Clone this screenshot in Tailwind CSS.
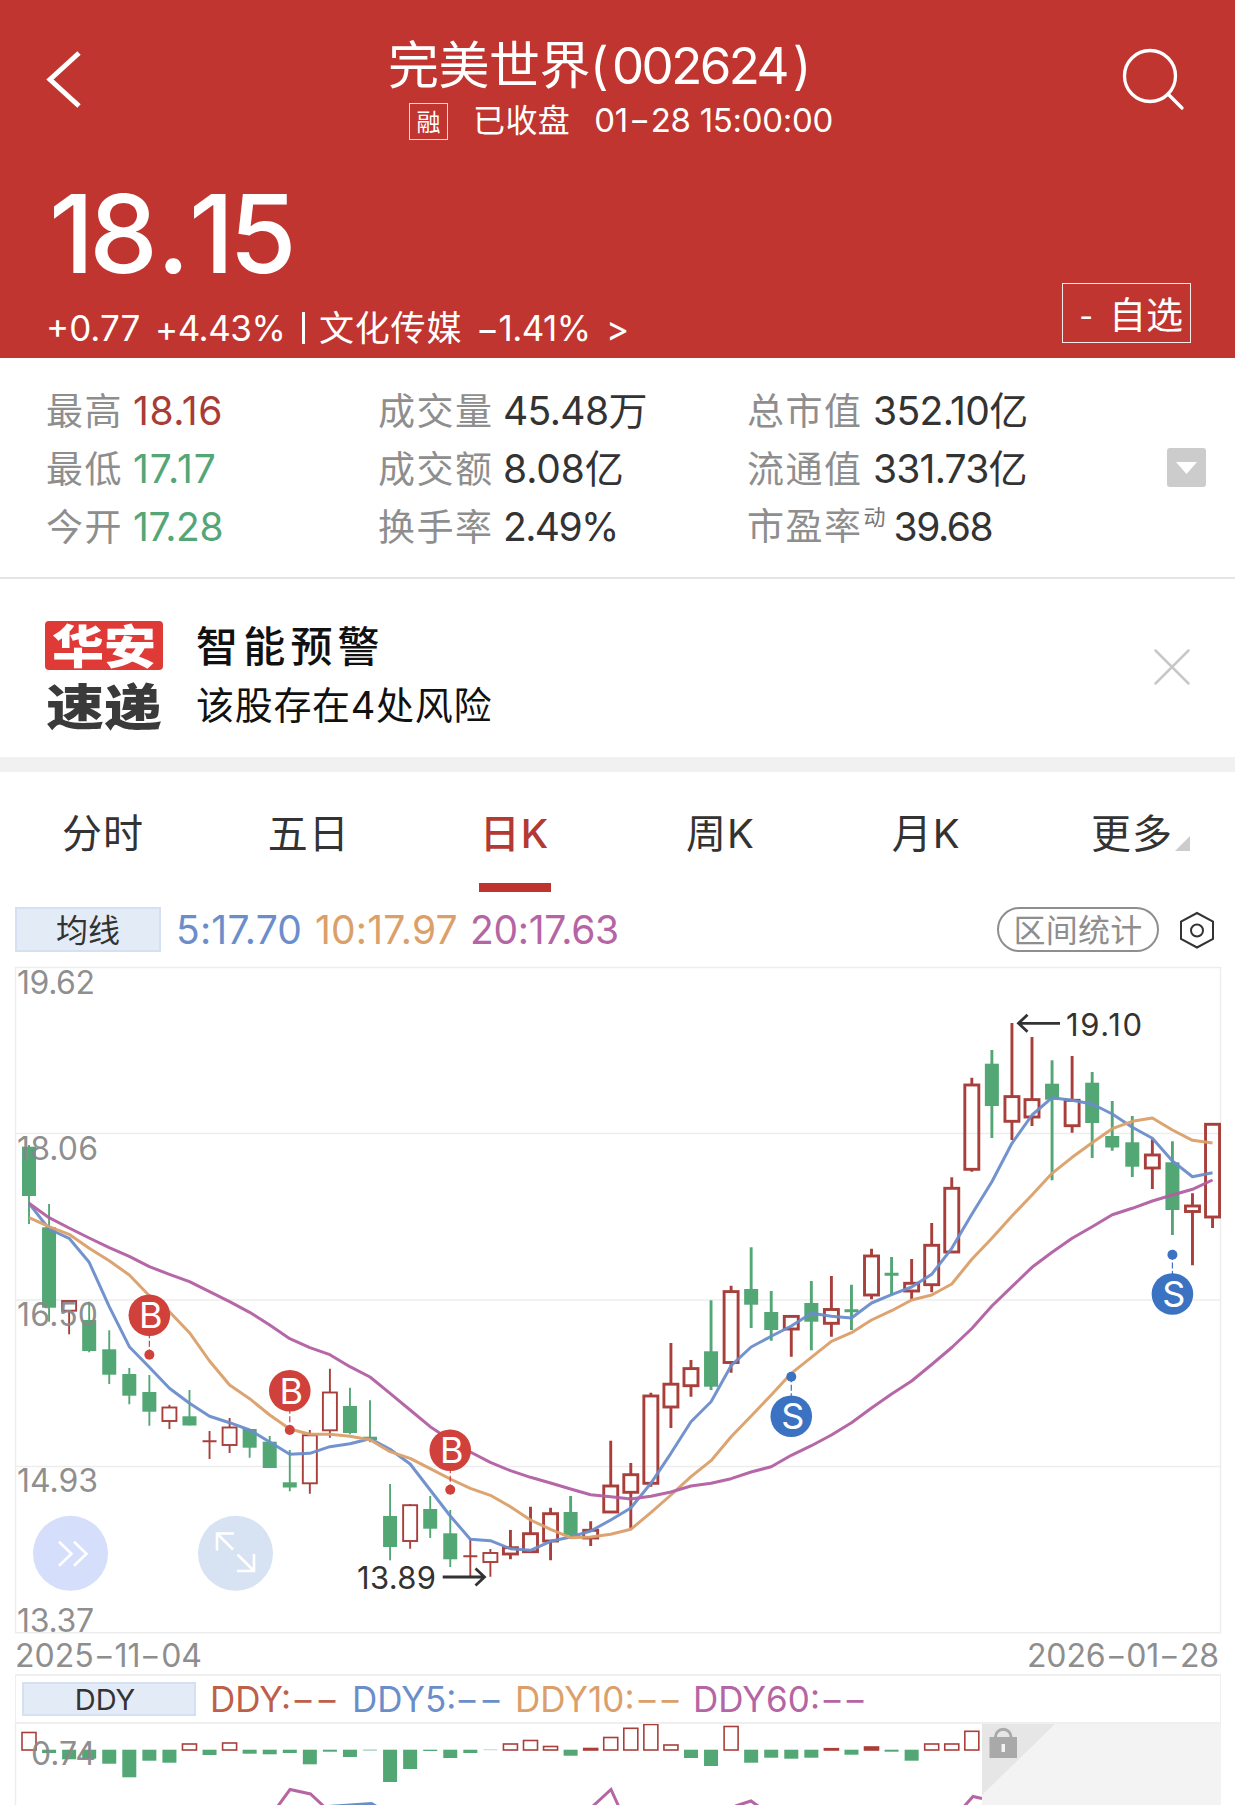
<!DOCTYPE html>
<html lang="zh-CN">
<head>
  <meta charset="UTF-8" />
  <meta name="viewport" content="width=device-width, initial-scale=1.0"/>
  <title>完美世界(002624)</title>
  <script src="https://cdn.jsdelivr.net/npm/@tailwindcss/browser@4"></script>
</head>
<body class="w-[1235px] bg-white text-[#333] leading-none whitespace-nowrap overflow-x-hidden font-[Inter,'Noto_Sans_CJK_SC',sans-serif]">

  <!-- Header -->
  <header class="h-[358px] bg-[#c0352f] text-white">
    <div class="grid grid-cols-[388px_421px_1fr] h-[179px]">
      <svg class="w-[40px] h-[64px] ml-[44px] mt-[48px]" viewBox="0 0 40 64" fill="none" stroke="#fff" stroke-width="5">
        <path d="M35 5 6 31.500 35 58"/>
      </svg>
      <div class="flex flex-col pt-[40px]">
        <h1 class="text-[51px] tracking-[-0.5px]">完美世界<span class="tracking-[-2.6px]">(<span class="ml-[6px] mr-[6px]">002624</span>)</span></h1>
        <div class="flex items-start mt-[12px] ml-[21px]">
          <span class="shrink-0 border border-white/80 w-[39px] h-[37px] text-[24px] leading-[38px] text-center text-white">融</span>
          <span class="shrink-0 text-[32px] tracking-[0.4px] ml-[25px] mt-[2px]">已收盘</span>
          <span class="shrink-0 text-[33px] tracking-[-0.3px] ml-[24px] mt-[1px]">01<i class="inline-block not-italic scale-x-[1.4] mx-[4px]">-</i>28 15:00:00</span>
        </div>
      </div>
      <svg class="w-[64px] h-[64px] ml-[312px] mt-[48px]" viewBox="0 0 64 64" fill="none" stroke="#fff" stroke-width="3.300" stroke-linecap="round">
        <circle cx="29" cy="28" r="25.500"/>
        <path d="M47 46 61 60"/>
      </svg>
    </div>
    <div class="flex justify-between pl-[46px] pr-[44px]">
      <div>
        <div class="text-[109px] font-medium tracking-[-5px] pl-[3px]">18<span class="mx-[4px]">.</span>15</div>
        <div class="flex text-[35px] mt-[23px]">
          <span class="w-[109px] tracking-[0px]">+0.77</span>
          <span class="w-[145px] tracking-[-0.5px]">+4.43%</span>
          <span class="w-[3px] h-[32px] mt-[1px] mx-[2px] bg-white"></span>
          <span class="w-[157px] ml-[12px] tracking-[0.8px]">文化传媒</span>
          <span class="w-[130px] tracking-[-0.6px]">−1.41%</span>
          <span>&gt;</span>
        </div>
      </div>
      <div class="mt-[104px] w-[129px] h-[60px] border border-white/90 flex items-center justify-end pr-[7px] pt-[4px] text-[37px]">
        <span class="mr-[16px] text-[30px] pt-[2px]">-</span>自选
      </div>
    </div>
  </header>

  <!-- Quote -->
  <section class="relative h-[221px] pt-[24px] pl-[46px] border-b-2 border-[#e5e5e5] grid grid-cols-[332px_369px_1fr] auto-rows-[58px] text-[39px] leading-[58px] tracking-[-0.8px]">
    <div class="h-[58px]"><span class="inline-block w-[87px] text-[37px] text-[#8e8e8e] tracking-[1.5px]">最高</span><span class="text-[#a83c36] tracking-[0.6px]">18.16</span></div>
    <div class="h-[58px]"><span class="inline-block w-[125px] text-[37px] text-[#8e8e8e] tracking-[1.5px]">成交量</span><span class="tracking-[-0.6px]">45.48万</span></div>
    <div class="h-[58px]"><span class="inline-block w-[126px] text-[37px] text-[#8e8e8e] tracking-[1.5px]">总市值</span><span class="tracking-[-0.6px]">352.10亿</span></div>
    <div class="h-[58px]"><span class="inline-block w-[87px] text-[37px] text-[#8e8e8e] tracking-[1.5px]">最低</span><span class="text-[#54a677] tracking-[1px]">17.17</span></div>
    <div class="h-[58px]"><span class="inline-block w-[125px] text-[37px] text-[#8e8e8e] tracking-[1.5px]">成交额</span><span class="tracking-[-0.1px]">8.08亿</span></div>
    <div class="h-[58px]"><span class="inline-block w-[126px] text-[37px] text-[#8e8e8e] tracking-[1.5px]">流通值</span><span>331.73亿</span></div>
    <div class="h-[58px]"><span class="inline-block w-[87px] text-[37px] text-[#8e8e8e] tracking-[1.5px]">今开</span><span class="text-[#54a677] tracking-[-0.4px]">17.28</span></div>
    <div class="h-[58px]"><span class="inline-block w-[125px] text-[37px] text-[#8e8e8e] tracking-[1.5px]">换手率</span><span class="tracking-[-1.6px]">2.49%</span></div>
    <div class="h-[58px] flex"><span class="text-[37px] text-[#8e8e8e] tracking-[1.5px]">市盈率</span><span class="w-[31px] pl-[1px] text-[22px] leading-[38px] text-[#777]">动</span><span class="tracking-[-1.4px]">39.68</span></div>
    <div class="absolute left-[1167px] top-[90px] w-[39px] h-[39px] rounded-[3px] bg-[#ccc] flex items-center justify-center">
      <svg class="w-[21px] h-[12px]" viewBox="0 0 21 12"><path d="M0 0H21L10.500 12Z" fill="#fff"/></svg>
    </div>
  </section>

  <!-- Alert -->
  <section class="h-[178px] flex pl-[45px] pt-[42px]">
    <div class="w-[118px] font-black text-center">
      <div class="h-[49px] rounded-[4px] bg-[#e03a37] text-white text-[46px] leading-[51px]"><span class="inline-block scale-x-[1.13]">华安</span></div>
      <div class="mt-[14px] h-[46px] text-[#3a3a3a] text-[49px] leading-[47px]"><span class="inline-block scale-x-[1.18]">速递</span></div>
    </div>
    <div class="ml-[33px] pt-[5px] text-[#111]">
      <div class="text-[42px] font-medium tracking-[5.200px]">智能预警</div>
      <div class="text-[38px] mt-[18px] tracking-[0.7px]">该股存在4处风险</div>
    </div>
    <svg class="w-[38px] h-[38px] ml-auto mr-[44px] mt-[27px]" viewBox="0 0 38 38" stroke="#c8c8c8" stroke-width="2.500" stroke-linecap="round">
      <path d="M2.500 2.500 35.500 35.500M35.500 2.500 2.500 35.500"/>
    </svg>
  </section>
  <div class="h-[15px] bg-[#f1f1f1]"></div>

  <!-- Tabs -->
  <nav class="h-[120px] grid grid-cols-6 grid-rows-[120px] text-[40px] leading-[124px] text-center tracking-[1px]">
    <span>分时</span>
    <span>五日</span>
    <span class="relative font-medium text-[#b23a33]">日K<i class="absolute left-1/2 bottom-0 w-[72px] h-[9px] -translate-x-1/2 bg-[#bf342f]"></i></span>
    <span>周K</span>
    <span>月K</span>
    <span class="relative">更多<i class="absolute right-[45px] top-[64px] w-[15px] h-[15px] bg-[#ccc] [clip-path:polygon(100%_0,100%_100%,0_100%)]"></i></span>
  </nav>

  <!-- Moving averages -->
  <div class="h-[60px] pt-[15px] pl-[15px] pr-[20px] flex text-[39px] leading-[46px] tracking-[0px]">
    <span class="w-[146px] h-[45px] border-2 border-[#d5e1f1] bg-[#e3ebf7] text-[32px] leading-[43px] text-center tracking-normal">均线</span>
    <span class="ml-[15px] w-[139px] tracking-[0.2px] text-[#6b8ecb]">5:17.70</span>
    <span class="w-[155px] tracking-[0.2px] text-[#dba06a]">10:17.97</span>
    <span class="text-[#b565a4] tracking-[-0.3px]">20:17.63</span>
    <span class="ml-auto w-[162px] h-[45px] border-2 border-[#8e8e8e] rounded-full text-[#8e8e8e] text-[32px] leading-[43px] text-center tracking-[0.2px]">区间统计</span>
    <svg class="ml-[20px] mt-[4px] w-[36px] h-[38px]" viewBox="0 0 36 38" fill="none" stroke="#333" stroke-width="2">
      <path d="M18 2 34 10.500V28L18 36.500 2 28V10.500Z"/>
      <circle cx="18" cy="19.500" r="6"/>
    </svg>
  </div>

  <!-- Daily K chart -->
  <svg id="kline" class="block w-[1235px] h-[686px] overflow-visible" viewBox="0 952 1235 686" font-family="Inter, sans-serif">
    <g fill="none" stroke="#ededed" stroke-width="1.500">
      <path d="M15.500 967.500H1220.500V1632.800H15.500Z"/>
      <path d="M15 1133.500H1220M15 1300H1220M15 1466.500H1220"/>
    </g>
    <g id="candles"></g>
    <g id="averages" fill="none" stroke-width="3" stroke-linejoin="round" opacity="0.95"></g>
    <g font-size="32" fill="#888" fill-opacity="0.95">
      <text x="17" y="994" textLength="78">19.62</text>
      <text x="17" y="1160" textLength="81">18.06</text>
      <text x="17" y="1326" textLength="81">16.50</text>
      <text x="17" y="1492" textLength="81">14.93</text>
      <text x="17" y="1632" textLength="77">13.37</text>
    </g>
    <g font-size="31" fill="#333">
      <text x="357" y="1588.500" textLength="79">13.89</text>
      <text x="1066" y="1035.500" textLength="76">19.10</text>
    </g>
    <path d="M442.700 1577H484M475.500 1568.500 484.500 1577 475.500 1585.500M1060 1023.300H1019M1027.500 1014.800 1018.500 1023.300 1027.500 1031.800" fill="none" stroke="#333" stroke-width="2.800"/>
    <g id="marks" font-size="36" text-anchor="middle"></g>

    <circle cx="70.500" cy="1553.300" r="37.500" fill="#d5dffb"/>
    <path d="M59 1541.700 71.500 1553.700 59 1565.700M74 1541.700 86.500 1553.700 74 1565.700" fill="none" stroke="#fff" stroke-width="2.600"/>
    <circle cx="235.500" cy="1553.300" r="37.500" fill="#d7e3f2"/>
    <path d="M217 1550.500V1533.500H234M217 1533.500 233 1549.500M237.500 1554.500 254 1571M254 1554V1571H237" fill="none" stroke="#fff" stroke-width="2.600"/>
  </svg>

  <div class="h-[36px] pl-[15px] pr-[16px] flex justify-between text-[32px] leading-[36px] text-[#8e8e8e]">
    <span>2025<i class="inline-block not-italic scale-x-[1.4] mx-[3px]">-</i>11<i class="inline-block not-italic scale-x-[1.4] mx-[3px]">-</i>04</span>
    <span class="tracking-[-0.1px]">2026<i class="inline-block not-italic scale-x-[1.4] mx-[3px]">-</i>01<i class="inline-block not-italic scale-x-[1.4] mx-[3px]">-</i>28</span>
  </div>

  <!-- DDY -->
  <div class="h-[50px] ml-[15px] mr-[14px] border-x border-y-2 border-[#efefef] flex pt-[6px] pl-[6px] text-[35px] leading-[35px]">
    <span class="w-[174px] h-[34px] border-2 border-[#d5e1f1] bg-[#e3ebf7] text-[29px] leading-[32px] text-center pr-[8px]">DDY</span>
    <span class="ml-[14px] w-[142px] text-[#bd5f4a]">DDY:<i class="inline-block not-italic scale-x-[1.5] ml-[4px] mr-[8px]">-</i><i class="inline-block not-italic scale-x-[1.5]">-</i></span>
    <span class="w-[163px] text-[#6b8ecb]">DDY5:<i class="inline-block not-italic scale-x-[1.5] ml-[3px] mr-[7px]">-</i><i class="inline-block not-italic scale-x-[1.5]">-</i></span>
    <span class="w-[178px] text-[#dba06a]">DDY10:<i class="inline-block not-italic scale-x-[1.5] ml-[4px] mr-[7px]">-</i><i class="inline-block not-italic scale-x-[1.5]">-</i></span>
    <span class="text-[#b565a4]">DDY60:<i class="inline-block not-italic scale-x-[1.5] ml-[4px] mr-[7px]">-</i><i class="inline-block not-italic scale-x-[1.5]">-</i></span>
  </div>
  <svg id="ddy" class="block w-[1235px] h-[81px]" viewBox="0 1724 1235 81" font-family="Inter, sans-serif">
    <path d="M15.500 1724V1805" stroke="#ededed" stroke-width="1.500"/>
    <g id="bars"></g>
    <text x="31" y="1765" font-size="32" fill="#888" fill-opacity="0.95" textLength="65">0.74</text>
    <g fill="none" stroke-width="3">
      <path d="M278 1806 290 1789.500 310.500 1794 323.500 1806M593 1806 611 1789.500 618.500 1806M735.500 1806 751 1801 758 1806M964.500 1806 973 1796.500 982 1798.500" stroke="#b565a4"/>
      <path d="M328 1806.500 371.500 1803.500 376 1806" stroke="#6b8ecb"/>
    </g>
    <path d="M982 1722H1221V1805H982Z" fill="#f3f3f3"/>
    <path d="M982 1722H1057L982 1795Z" fill="#e6e6e6"/>
    <path d="M989.500 1737H1017V1758H989.500Z" fill="#a9a9a9"/>
    <path d="M995.500 1738V1737A7.700 7.700 0 0 1 1011 1737V1738" fill="none" stroke="#a9a9a9" stroke-width="3"/>
    <path d="M1001.500 1744H1005V1752H1001.500Z" fill="#f3f3f3"/>
  </svg>

  <script>
  const RED = '#a83f3a';
  const GREEN = '#52a775';
  const step = 20.06;
  const cx = i => 29 + i * step;

  // [up, high, body top, body bottom, low]
  const candles = [
    [0,1145,1146.7,1196,1224],[0,1204,1227.3,1307.7,1321.7],[1,1301,1301,1310.7,1334.3],[0,1301.7,1320,1351,1352.3],
    [0,1330.3,1349.3,1374.7,1384],[0,1368,1374,1395.7,1404.3],[0,1375,1392,1411.7,1425.7],[1,1404.7,1407.5,1421,1429],
    [0,1390,1416.3,1425.5,1425.5],[1,1431,1441.3,1441.3,1459],[1,1418,1427.5,1445,1453],[0,1429,1429,1447.7,1457.7],
    [0,1436,1441.7,1468,1468],[0,1450,1482.3,1487.5,1491.3],[1,1430,1435.3,1483.3,1493.7],[1,1368.7,1392.5,1430.3,1437.7],
    [0,1387.7,1406,1433,1434.3],[0,1400.3,1436.7,1440,1442.3],[0,1484,1516,1547,1560.3],[1,1504,1505.2,1541,1548.7],
    [0,1496,1509,1528.7,1538],[0,1510,1533.3,1559.3,1567],[1,1538.3,1556.3,1556.3,1576.7],[1,1549,1553,1562,1576.7],
    [1,1530,1547.7,1554,1559.3],[1,1506.7,1533.7,1551.7,1553],[1,1507.7,1513.7,1541,1560.3],[0,1496,1512,1535,1537],
    [1,1521.3,1530.3,1538,1546],[1,1440.7,1486,1512,1512],[1,1463,1474.7,1492.3,1528.5],[1,1392.7,1396,1483.3,1486.7],
    [1,1343,1384.2,1407,1428],[1,1360,1368.6,1385.7,1396.7],[0,1300.3,1351.3,1386.7,1390],[1,1285.7,1291.6,1362.5,1372.7],
    [0,1247.3,1289,1304.7,1328],[0,1291,1312,1330,1340.7],[1,1316,1316.4,1329,1356.7],[0,1281,1303,1321.7,1350.3],
    [1,1276,1309.5,1323.3,1336.7],[0,1284.7,1310.7,1310.7,1330],[1,1248.7,1256,1295,1299.3],[0,1257,1274.3,1274.3,1295],
    [1,1259,1283.3,1291,1299.7],[1,1223,1245.3,1284.7,1292.3],[1,1177.3,1188.3,1252,1252],[1,1077.7,1085,1169.3,1171.7],
    [0,1050,1063.7,1106,1138],[1,1023,1096.6,1121.3,1140],[1,1037,1099.6,1117,1126],[0,1060.3,1083.7,1099.7,1180.3],
    [1,1056,1100.3,1125.7,1132.7],[0,1072,1082.7,1123,1158],[0,1101,1136,1147.5,1150.7],[0,1116,1142.3,1166.7,1177],
    [1,1139.3,1155,1168,1189],[0,1141.3,1162.3,1210,1235],[1,1193.3,1206,1211.5,1265.3],[1,1124,1124.3,1217,1228]
  ];

  const ma5 = [1203.3,1229,1238.3,1262.3,1306.7,1346.7,1367.3,1388.3,1403.3,1416.3,1422.7,1430,1442,1454.3,1453.3,1446.7,1443.7,1438.7,1449.3,1464,1490,1516,1539.3,1540.7,1548.7,1550.3,1541.3,1537,1531,1520,1508,1483.3,1453.3,1421.7,1401.7,1365.7,1347,1336.3,1326,1313.3,1316.3,1318,1303,1294.7,1287,1274.3,1248.3,1214.3,1181.7,1143.3,1115,1097.7,1100.3,1104,1114,1127.3,1138.3,1161,1176.7,1172.7];
  const ma10 = [1217.7,1226.7,1234.3,1248.3,1260.7,1275,1295.7,1311.7,1332.7,1361,1385,1398.7,1415,1429,1434.3,1434.3,1436.3,1439.7,1451.7,1458.3,1468.7,1479,1488.3,1495.3,1506.7,1520,1529.3,1537.7,1537,1534.3,1529.3,1512.7,1495,1476.7,1460.7,1436.7,1416,1395,1373.3,1357.3,1341.3,1332.7,1320,1310.7,1300,1295,1284,1259.3,1238.3,1216,1195,1173.3,1157.3,1142.7,1128.7,1121.3,1118,1130,1140.3,1143];
  const ma20 = [1203.3,1217.7,1228,1238,1247.7,1256.3,1266.7,1274.3,1281.7,1291.7,1301.7,1312.3,1325,1338.7,1347.7,1354.7,1366.7,1377,1393.3,1410,1426.7,1440,1452,1462.3,1470.7,1477.3,1483,1489,1494.7,1496.7,1499,1496.3,1492,1486,1483.3,1478.7,1472,1466.7,1455.3,1445.7,1435,1422.7,1408,1394,1381,1364.5,1347.5,1328.5,1306,1286.7,1267.3,1252.3,1238.3,1226.7,1214.7,1208.3,1201,1195,1189.3,1180];

  let html = '';
  candles.forEach(([up, high, top, bottom, low], i) => {
    const x = cx(i);
    const w = i < 24 ? 1.9 : 2.9;
    const color = up ? RED : GREEN;
    if (bottom === top) {
      html += `<path d="M${x} ${high}V${low}M${x - 7} ${top}H${x + 7}" stroke="${color}" stroke-width="${w}"/>`;
    } else if (up) {
      html += `<path d="M${x} ${high}V${top}M${x} ${bottom}V${low}" stroke="${color}" stroke-width="${w}"/>`;
      html += `<rect x="${x - 7}" y="${top}" width="14" height="${bottom - top}" fill="none" stroke="${color}" stroke-width="${w}"/>`;
    } else {
      html += `<path d="M${x} ${high}V${low}" stroke="${color}" stroke-width="${w}"/>`;
      html += `<rect x="${x - 7}" y="${top}" width="14" height="${bottom - top}" fill="${color}"/>`;
    }
  });
  document.getElementById('candles').innerHTML = html;

  const line = (data, color) => `<polyline points="${data.map((y, i) => cx(i) + ',' + y).join(' ')}" stroke="${color}"/>`;
  document.getElementById('averages').innerHTML = line(ma5, '#6b8ecb') + line(ma10, '#dba06a') + line(ma20, '#b25fa3');

  // trade points: index, circle y, dot y
  const marks = [['B',6,1315.3,1354.7],['B',13,1390.7,1430],['B',21,1450.3,1489.7],['S',38,1416.3,1376.7],['S',57,1294,1254.7]];
  document.getElementById('marks').innerHTML = marks.map(([t, i, y, dot]) => {
    const x = cx(i);
    const color = t === 'B' ? '#cf413a' : '#3b73c2';
    return `<path d="M${x} ${y}V${dot}" stroke="${color}" stroke-width="1.2" stroke-dasharray="6 2.5"/>
      <circle cx="${x}" cy="${dot}" r="5" fill="${color}"/><circle cx="${x}" cy="${y}" r="20.800" fill="${color}"/>
      <text x="${x + 1.5}" y="${y + 13}" fill="#fff">${t}</text>`;
  }).join('');

  // far end of each bar, the zero line is at 1750
  const ddy = [1732.5,1753,1759.3,1758.7,1763.7,1777.3,1760.7,1762.7,1744,1755,1743,1753.7,1754.3,1753,1764.3,1751.7,1757,1750.4,1782,1769,1751,1758,1753,1750.1,1744,1740.5,1746.5,1755.7,1748.5,1737.5,1728.3,1724.5,1745,1758,1766,1726.5,1762.7,1757.7,1758.7,1757.7,1748.7,1754.7,1747,1751.7,1760.7,1744,1744,1731.3];
  document.getElementById('bars').innerHTML = ddy.map((y, i) => {
    const x = cx(i) - 7;
    return y < 1750
      ? `<rect x="${x}" y="${y}" width="14" height="${1750 - y}" fill="${1750 - y < 3.1 ? RED : 'none'}" stroke="${RED}" stroke-width="1.6"/>`
      : `<rect x="${x}" y="1749.700" width="14" height="${y - 1749.7}" fill="${GREEN}"/>`;
  }).join('');
  </script>
</body>
</html>
